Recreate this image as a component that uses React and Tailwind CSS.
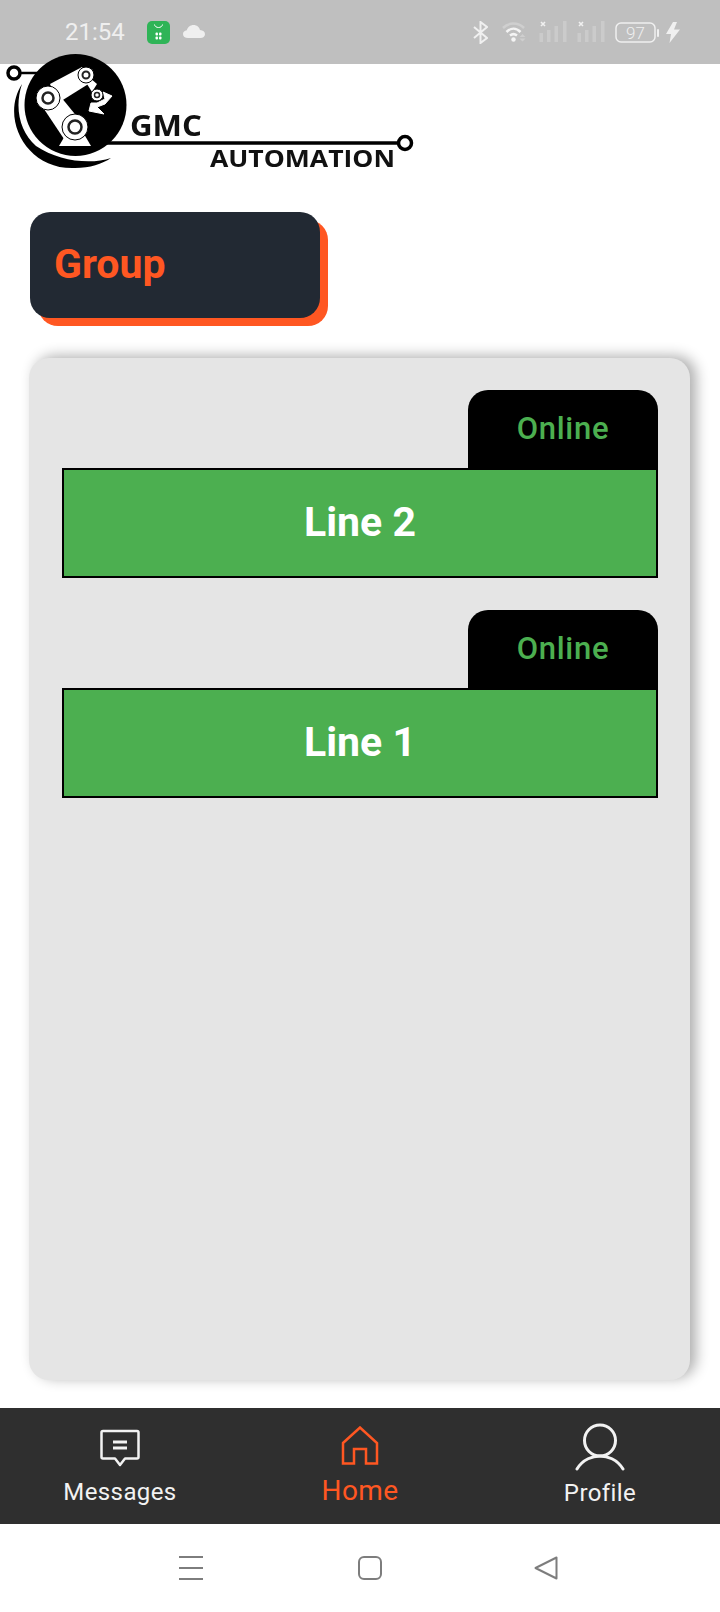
import React from 'react';

const roboto = { fontFamily: 'Roboto, "Liberation Sans", sans-serif' };

function Logo() {
  return (
    <svg width="420" height="125" viewBox="0 50 420 125" className="relative z-10 block -mt-[14px] blur-[0.5px]">
      <circle cx="14" cy="73" r="6" fill="white" stroke="black" strokeWidth="3.5" />
      <path d="M20 73H38" stroke="black" strokeWidth="2.5" />
      <path d="M22 84C0 118 26 170 75 168C90 168 102 164 111 158C90 165 58 161 36 146C20 132 14 108 22 84Z" fill="black" />
      <path d="M104 143H398" stroke="black" strokeWidth="3.5" />
      <circle cx="405" cy="143" r="6.5" fill="white" stroke="black" strokeWidth="3.5" />
      <circle cx="75.500" cy="105" r="51" fill="black" />
      {/* robot arm */}
      <path d="M59 146L66 134H84L91 146Z" fill="white" />
      <path d="M42 106L56 91L88 130L66 142Z" fill="white" />
      <path d="M50 84L82 67L90 83L58 103Z" fill="white" />
      <path d="M90 78L97 84L92 92L87 84Z" fill="white" />
      <path d="M91 103L89 111L104 114L97 107L105 104L112 96L103 92L105 99L97 103Z" fill="white" stroke="white" strokeWidth="1" />
      <circle cx="75" cy="127" r="13" fill="white" stroke="black" strokeWidth="1" />
      <circle cx="75" cy="127" r="6.500" fill="white" stroke="#222" strokeWidth="2.500" />
      <circle cx="48" cy="98" r="12" fill="white" stroke="black" strokeWidth="1" />
      <circle cx="48" cy="98" r="5.500" fill="white" stroke="#222" strokeWidth="2.500" />
      <circle cx="86" cy="75" r="8" fill="white" stroke="black" strokeWidth="1" />
      <circle cx="86" cy="75" r="3.500" fill="white" stroke="#222" strokeWidth="2" />
      <circle cx="97" cy="95" r="6" fill="white" stroke="black" strokeWidth="1" />
      <circle cx="97" cy="95" r="2.500" fill="white" stroke="#222" strokeWidth="1.500" />
      <text x="130" y="136" fontFamily="Open Sans, sans-serif" fontWeight="700" fontSize="29" textLength="72" lengthAdjust="spacingAndGlyphs" fill="#111">GMC</text>
      <text x="210" y="167" fontFamily="Open Sans, sans-serif" fontWeight="700" fontSize="23" textLength="185" lengthAdjust="spacingAndGlyphs" fill="#111">AUTOMATION</text>
    </svg>
  );
}

function Signal() {
  return (
    <svg width="28" height="22" viewBox="0 0 28 22">
      <path d="M2 1L6 5M6 1L2 5" stroke="#f0f0f0" strokeWidth="1.600" />
      <g fill="#cbcbcb">
        <rect x="0.500" y="12" width="3.500" height="9" />
        <rect x="8" y="9" width="3.500" height="12" />
        <rect x="15.500" y="5" width="3.500" height="16" />
        <rect x="24" y="0" width="3.500" height="21" />
      </g>
    </svg>
  );
}

function StatusBar() {
  return (
    <div className="h-16 shrink-0 bg-[#bfbfbf] flex items-center text-[#efefef]" style={roboto}>
      <span className="ml-[65px] w-[58px] text-[24px] font-normal leading-none">21:54</span>
      <svg width="23" height="23" viewBox="0 0 23 23" className="ml-[24px]">
        <rect width="23" height="23" rx="5" fill="#2fb457" />
        <path d="M7.500 3.500C8 7.500 15 7.500 15.500 3.500" stroke="white" strokeWidth="1" fill="none" />
        <g fill="white"><rect x="8.500" y="11.500" width="2.500" height="3" rx="1" /><rect x="12" y="11.500" width="2.500" height="3" rx="1" /><rect x="8.500" y="15.500" width="2.500" height="3" rx="1" /><rect x="12" y="15.500" width="2.500" height="3" rx="1" /></g>
      </svg>
      <svg width="22" height="13" viewBox="0 0 22 13" className="ml-[13px] -mt-[1px]">
        <path d="M5 13C2 13 0 11.500 0 9C0 7 1.500 5.500 3.800 5.300C4.600 2.200 7.200 0 10.600 0C14 0 16.400 2.200 17 5C20 5.200 22 6.800 22 9.200C22 11.500 20 13 17.500 13Z" fill="#efefef" />
      </svg>

      <div className="ml-auto flex items-center">
        <svg width="15" height="23" viewBox="0 0 15 23" fill="none" stroke="#f0f0f0" strokeWidth="2">
          <path d="M1 6L14 17L7.500 22V1L14 6L1 17" />
        </svg>
        <svg width="24" height="22" viewBox="0 0 24 22" fill="none" className="ml-[14px]">
          <path d="M1 7C7 1 16 1 22 7" stroke="#cfcfcf" strokeWidth="2.500" />
          <path d="M4.500 11C9 6.500 14 6.500 18.500 11" stroke="#f4f4f4" strokeWidth="2.500" />
          <path d="M8 14.500C10.500 12.500 12.500 12.500 15 14.500" stroke="#f4f4f4" strokeWidth="2.500" />
          <circle cx="11.500" cy="18.500" r="2.200" fill="#f4f4f4" />
          <path d="M20.500 13L23.500 16H17.500ZM17.500 17.500H23.500L20.500 20.500Z" fill="#cfcfcf" />
        </svg>
        <div className="ml-[13px]"><Signal /></div>
        <div className="ml-[10px]"><Signal /></div>
        <svg width="44" height="21" viewBox="0 0 44 21" className="ml-[10px]">
          <rect x="1" y="1" width="39" height="19" rx="5" fill="none" stroke="#f0f0f0" strokeWidth="1.500" />
          <rect x="42" y="7" width="2" height="8" rx="1" fill="#f0f0f0" />
          <text x="20.500" y="16.500" textAnchor="middle" fontSize="17" fontFamily="Roboto, sans-serif" fontWeight="300" fill="#f0f0f0">97</text>
        </svg>
        <svg width="14" height="21" viewBox="0 0 14 21" className="ml-[7px] mr-[40px]">
          <path d="M7 0L0 12H5L3.500 21L14 7.500H8L11 0Z" fill="#f0f0f0" />
        </svg>
      </div>
    </div>
  );
}

function LineCard({ name }) {
  return (
    <div className="flex flex-col items-end mb-[32px]">
      <div className="w-[190px] h-[78px] rounded-t-[20px] bg-black flex items-center justify-center text-[#4caf50] text-[31px] font-medium tracking-[0.7px]">
        Online
      </div>
      <div className="w-full h-[110px] border-2 border-black bg-[#4caf50] flex items-center justify-center text-white text-[41px] font-bold">
        {name}
      </div>
    </div>
  );
}

export default function App() {
  return (
    <div className="w-[720px] h-[1612px] bg-white flex flex-col overflow-hidden" style={roboto}>
      <StatusBar />
      <Logo />

      <div className="ml-[30px] mt-[37px] w-[290px] h-[106px] shrink-0 rounded-[20px] bg-[#222933] shadow-[8px_8px_0_#ff5722] flex items-center pl-[24px] pb-[1px]">
        <span className="text-[41px] font-bold text-[#ff5722]">Group</span>
      </div>

      {/* Main card */}
      <div className="ml-[29px] mr-[30px] mt-[40px] mb-[28px] flex-1 rounded-[20px] bg-[#e5e5e5] shadow-[6px_-2px_14px_rgba(0,0,0,0.32)] pt-[32px] pl-[33px] pr-[32px]">
        <LineCard name="Line 2" />
        <LineCard name="Line 1" />
      </div>

      {/* Bottom nav */}
      <div className="h-[116px] shrink-0 bg-[#2f2f2f] grid grid-cols-3 text-[#f2f2f2]">
        <div className="flex flex-col items-center pt-[21px]">
          <svg width="40" height="38" viewBox="0 0 40 38" fill="none" stroke="currentColor" strokeWidth="2.500" strokeLinejoin="round">
            <path d="M3 2H37C38 2 38.500 2.500 38.500 3.500V28C38.500 29 38 29.500 37 29.500H25L20 36L15 29.500H3C2 29.500 1.500 29 1.500 28V3.500C1.500 2.500 2 2 3 2Z" />
            <path d="M13 13H27M13 19H27" strokeWidth="3" />
          </svg>
          <span className="text-[24px] leading-[30px] tracking-[0.4px] mt-[10px]">Messages</span>
        </div>
        <div className="flex flex-col items-center pt-[18px] text-[#ff5722]">
          <svg width="38" height="39" viewBox="0 0 38 39" fill="none" stroke="currentColor" strokeWidth="2.500">
            <path d="M2 17L19 1.500L36 17V37.500H25V23H13V37.500H2Z" />
          </svg>
          <span className="text-[28px] leading-[34px] tracking-[0.4px] mt-[9px]">Home</span>
        </div>
        <div className="flex flex-col items-center pt-[15px]">
          <svg width="50" height="48" viewBox="0 0 50 48" fill="none" stroke="currentColor" strokeWidth="3" strokeLinecap="round">
            <circle cx="25" cy="17.500" r="15.500" />
            <path d="M2 46C8 36 18 33 25 33C32 33 42 36 48 46" />
          </svg>
          <span className="text-[24px] leading-[30px] tracking-[0.4px] mt-[7px]">Profile</span>
        </div>
      </div>

      {/* System nav */}
      <div className="h-[88px] shrink-0 bg-white flex items-center text-[#7d7d7d]">
        <svg width="24" height="24" viewBox="0 0 24 24" stroke="currentColor" strokeWidth="2" className="ml-[179px] -mt-[1px]">
          <path d="M0 1H24M0 12H24M0 23H24" />
        </svg>
        <svg width="24" height="24" viewBox="0 0 24 24" fill="none" stroke="currentColor" strokeWidth="2" className="ml-[155px] -mt-[1px]">
          <rect x="1" y="1" width="22" height="22" rx="5" />
        </svg>
        <svg width="24" height="24" viewBox="0 0 24 24" fill="none" stroke="currentColor" strokeWidth="2" strokeLinejoin="round" className="ml-[152px] -mt-[1px]">
          <path d="M1.500 12L22.500 1.500V22.500Z" />
        </svg>
      </div>
    </div>
  );
}
